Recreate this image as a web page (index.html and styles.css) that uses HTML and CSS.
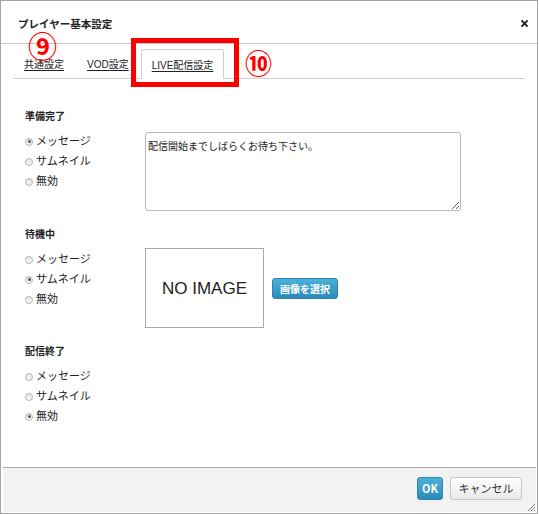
FILE: index.html
```html
<!DOCTYPE html>
<html lang="ja">
<head>
<meta charset="utf-8">
<title>プレイヤー基本設定</title>
<link rel="stylesheet" href="styles.css">
</head>
<body>
<div class="dialog">
  <div class="titlebar">
    <span class="title">プレイヤー基本設定</span>
    <span class="close"><svg width="7" height="7" viewBox="0 0 7 7"><path d="M1 1L6 6M6 1L1 6" stroke="#222" stroke-width="1.8" stroke-linecap="square"/></svg></span>
  </div>
  <div class="body">
    <div class="tabs">
      <a class="tab">共通設定</a>
      <a class="tab">VOD設定</a>
      <a class="tab active">LIVE配信設定</a>
    </div>
    <div class="content">
      <div class="section">
        <div class="label">準備完了</div>
        <div class="row">
          <div class="radios">
            <label class="radio"><span class="dot checked"></span>メッセージ</label>
            <label class="radio"><span class="dot"></span>サムネイル</label>
            <label class="radio"><span class="dot"></span>無効</label>
          </div>
          <textarea class="message">配信開始までしばらくお待ち下さい。</textarea>
        </div>
      </div>
      <div class="section">
        <div class="label">待機中</div>
        <div class="row">
          <div class="radios">
            <label class="radio"><span class="dot"></span>メッセージ</label>
            <label class="radio"><span class="dot checked"></span>サムネイル</label>
            <label class="radio"><span class="dot"></span>無効</label>
          </div>
          <div class="thumb-row">
            <div class="thumb">NO IMAGE</div>
            <button class="btn btn-blue small">画像を選択</button>
          </div>
        </div>
      </div>
      <div class="section">
        <div class="label">配信終了</div>
        <div class="row">
          <div class="radios">
            <label class="radio"><span class="dot"></span>メッセージ</label>
            <label class="radio"><span class="dot"></span>サムネイル</label>
            <label class="radio"><span class="dot checked"></span>無効</label>
          </div>
        </div>
      </div>
    </div>
  </div>
  <div class="footer">
    <button class="btn btn-blue ok">OK</button>
    <button class="btn btn-gray cancel">キャンセル</button>
  </div>
  <svg class="grip" width="9" height="9" viewBox="0 0 9 9"><path d="M8 1L1 8M8 4L4 8M8 7L7 8" stroke="#888" stroke-width="1"/></svg>
  <div class="mark-box"></div>
  <span class="num num9">⑨</span>
  <span class="num num10">⑩</span>
</div>
</body>
</html>
```

FILE: styles.css
```css
html, body {
  margin: 0;
  padding: 0;
  background: #fff;
}
body {
  font-family: "Noto Sans CJK JP", "Noto Sans", sans-serif;
  color: #222;
}
.dialog {
  position: relative;
  width: 538px;
  height: 514px;
  box-sizing: border-box;
  border: 1px solid #a4a4a4;
  display: flex;
  flex-direction: column;
  background: #fff;
}
.titlebar {
  border-bottom: 1px solid #c6c6c6;
  display: flex;
  align-items: center;
  justify-content: space-between;
  padding: 2px 9px 0 17px;
  box-sizing: border-box;
  flex: none;
  height: 43px;
}
.title {
  font-size: 10.5px;
  font-weight: bold;
  color: #222;
}
.close {
  display: flex;
}
.body {
  flex: 1;
}
.tabs {
  display: flex;
  gap: 1px;
  margin: 5px 12px 0 12px;
  border-bottom: 1px solid #d2d2d2;
  height: 29px;
}
.tab {
  font-family: "Liberation Sans", "Noto Sans CJK JP", sans-serif;
  font-size: 10px;
  color: #222;
  text-decoration: underline;
  text-underline-offset: 2px;
  padding: 0 11px;
  display: flex;
  align-items: center;
  box-sizing: border-box;
  height: 29px;
}
.tab.active {
  border: 1px solid #cfcfcf;
  border-bottom: none;
  border-radius: 3px 3px 0 0;
  padding: 0 10px;
  height: 30px;
  background: #fff;
}
.content {
  padding: 29px 0 0 24px;
}
.section {
  margin-bottom: 15px;
}
.label {
  font-size: 10px;
  font-weight: bold;
  line-height: 16px;
}
.row {
  display: flex;
  align-items: flex-start;
  margin-top: 6px;
}
.radios {
  width: 120px;
  display: flex;
  flex-direction: column;
}
.radio {
  display: flex;
  align-items: center;
  font-size: 11px;
  line-height: 20px;
  height: 20px;
}
.dot {
  width: 8px;
  height: 8px;
  box-sizing: border-box;
  border-radius: 50%;
  border: 1px solid #b4b4b4;
  background: linear-gradient(#e4e4e4, #f8f8f8);
  margin: 3px 3px 0 0;
  position: relative;
}
.dot.checked::after {
  content: "";
  position: absolute;
  left: 1.5px;
  top: 1.5px;
  width: 3px;
  height: 3px;
  border-radius: 50%;
  background: #555;
}
.message {
  width: 316px;
  height: 79px;
  box-sizing: border-box;
  margin: 2px 0 0 0;
  border: 1px solid #b9b9b9;
  border-radius: 3px;
  padding: 5px 2px;
  font-family: "Noto Sans CJK JP", sans-serif;
  font-size: 10px;
  line-height: 16px;
  color: #222;
  resize: both;
}
.thumb-row {
  display: flex;
  align-items: center;
  margin-top: 0;
}
.thumb {
  width: 119px;
  height: 80px;
  box-sizing: border-box;
  border: 1px solid #a9a9a9;
  display: flex;
  align-items: center;
  justify-content: center;
  font-family: "Liberation Sans", Arial, sans-serif;
  font-size: 17px;
  color: #222;
  padding-top: 2px;
}
.btn {
  font-family: "Noto Sans CJK JP", sans-serif;
  border-radius: 3px;
  cursor: pointer;
  padding: 0;
  display: flex;
  align-items: center;
  justify-content: center;
}
.btn-blue {
  background: linear-gradient(#4cb0d8, #2c8bb9);
  border: 1px solid #2a86b0;
  color: #fff;
  font-weight: bold;
}
.btn-gray {
  background: linear-gradient(#ffffff, #e9e9e9);
  border: 1px solid #c6c6c6;
  color: #333;
}
.small {
  margin-left: 8px;
  width: 66px;
  height: 21px;
  font-size: 10px;
}
.footer {
  flex: none;
  height: 45px;
  box-sizing: border-box;
  margin: 0 1px 1px 2px;
  border-top: 1px solid #a9a9a9;
  background: #f2f2f2;
  display: flex;
  align-items: center;
  justify-content: flex-end;
  gap: 7px;
  padding: 0 14px 4px 0;
}
.ok {
  width: 26px;
  height: 23px;
  font-size: 11px;
}
.cancel {
  width: 72px;
  height: 23px;
  font-size: 11px;
}
.grip {
  position: absolute;
  right: 1px;
  bottom: 1px;
}
.mark-box {
  position: absolute;
  left: 130px;
  top: 37px;
  width: 108px;
  height: 49px;
  box-sizing: border-box;
  border: 5px solid #f00;
}
.num {
  position: absolute;
  font-family: "Noto Sans CJK JP", sans-serif;
  font-weight: bold;
  color: #f00;
  display: flex;
  align-items: center;
  justify-content: center;
}
.num9 {
  font-size: 29px;
  line-height: 29px;
  width: 29px;
  height: 29px;
  left: 27px;
  top: 30px;
}
.num10 {
  font-size: 27px;
  line-height: 27px;
  width: 27px;
  height: 27px;
  left: 244px;
  top: 48px;
}
```
